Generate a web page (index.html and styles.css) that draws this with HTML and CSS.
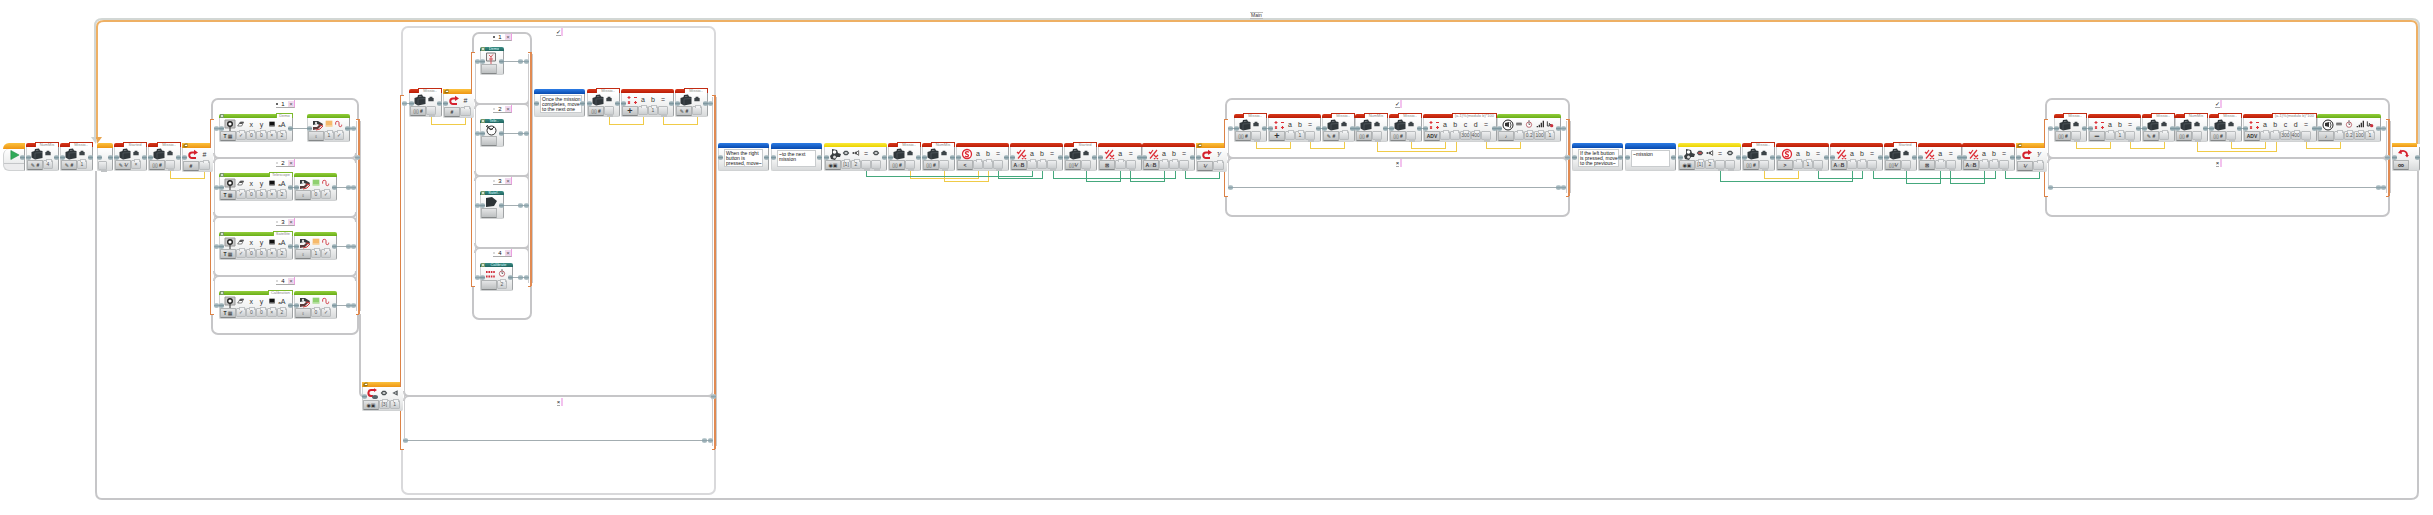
FILE: index.html
```html
<!DOCTYPE html>
<html lang="en">
<head>
<meta charset="utf-8">
<title>Main program</title>
<link rel="stylesheet" href="styles.css">
</head>
<body>
<svg class="defs" aria-hidden="true">
  <defs>
    <linearGradient id="ball" x1="0" y1="0" x2="0" y2="1"><stop offset="0" stop-color="#c9d6da"/><stop offset=".5" stop-color="#8da4ac"/><stop offset="1" stop-color="#bccace"/></linearGradient>
    <symbol id="case" viewBox="0 0 12 12"><path d="M.5 4 3.500 3 4 1 8 .5 9 2.500 11.500 3V10L4 11.500 .5 9.500Z" fill="#30373b"/><path d="M5 2.800V2H7.500V2.500Z" fill="#8a8f92"/><path d="M4 5V11M4 5 11 4.500" stroke="#515a5f" stroke-width=".7" fill="none"/></symbol>
    <symbol id="minicase" viewBox="0 0 12 12"><path d="M2 4.500 4 4V2.500H8V4L10 4.500V9.500H2Z" fill="#3c4347"/></symbol>
    <symbol id="play" viewBox="0 0 12 12"><path d="M2 1 11 6 2 11Z" fill="#2faa57" stroke="#1f8a43" stroke-width=".6"/></symbol>
    <symbol id="turn" viewBox="0 0 12 12"><path d="M8 3.500H5A2.500 2.500 0 0 0 5 9H9" fill="none" stroke="#d5202c" stroke-width="2"/><path d="M7 .8 11 3.500 7 6Z" fill="#d5202c"/></symbol>
    <symbol id="turnbrick" viewBox="0 0 12 12"><path d="M8 2H5A2.500 2.500 0 0 0 4 8H6" fill="none" stroke="#d5202c" stroke-width="2"/><path d="M7 .2 10 2 7 4Z" fill="#d5202c"/><ellipse cx="8" cy="9" rx="3" ry="2" fill="#57656a"/></symbol>
    <symbol id="loop" viewBox="0 0 12 12"><path d="M3 4C6 2 10 3 10 7" fill="none" stroke="#d5202c" stroke-width="1.800"/><path d="M1 5 4 1.500 5 6Z" fill="#d5202c"/><path d="M8 7H12L10 9.500Z" fill="#d5202c"/></symbol>
    <symbol id="math" viewBox="0 0 12 12"><path d="M1.500 3.500H4.500M3 2V5M8 3.500H11M2 7.500 4 9.500M4 7.500 2 9.500M8 8.500H11M9.500 7V10" stroke="#dd3038" stroke-width="1.100"/></symbol>
    <symbol id="logic" viewBox="0 0 12 12"><path d="M2 4 3.500 5.500 6 2M3 10.500 10 2M7 7 11 11M11 7 7 11" stroke="#dd3038" stroke-width="1.200" fill="none"/></symbol>
    <symbol id="compare" viewBox="0 0 12 12"><circle cx="6" cy="6" r="4.500" fill="#fff" stroke="#dd2833" stroke-width="1.300"/><path d="M8 4.200C6 3 4 4 4.500 5.200S8 6.500 7.500 7.700 5 9 4 7.800" stroke="#dd2833" stroke-width="1.300" fill="none"/></symbol>
    <symbol id="display" viewBox="0 0 12 12"><path d="M1 1H11V9H1Z" fill="#c9c9c9" stroke="#999"/><circle cx="6" cy="5" r="2.300" fill="#fff" stroke="#222" stroke-width="1.400"/><path d="M6 8V12" stroke="#333"/></symbol>
    <symbol id="eraser" viewBox="0 0 12 12"><path d="M1 9 5 3H10L7 9Z" fill="#fff" stroke="#444"/><path d="M5 3H10L8 6H3Z" fill="#555"/></symbol>
    <symbol id="contrast" viewBox="0 0 12 12"><path d="M2 2.500H10V9.500H2Z" fill="#111"/><path d="M2 8H10V9.500H2Z" fill="#888"/></symbol>
    <symbol id="light" viewBox="0 0 12 12"><path d="M1 2 6 2 11 5 10 7 5 5 1 6Z" fill="#33383a"/><path d="M10 6 6 10 1 11V8L5 8 9 4Z" fill="#5b3a3a"/><path d="M7 6 11 7 8 10 4 11" stroke="#d03a3a" fill="none"/><circle cx="4" cy="4" r="1.200" fill="#ddd"/></symbol>
    <symbol id="orange" viewBox="0 0 12 12"><path d="M1 1H11V10H1Z" fill="#f6ba6b"/><path d="M1 8H11V10H1Z" fill="#f8d9ac"/></symbol>
    <symbol id="green" viewBox="0 0 12 12"><path d="M1 1H11V10H1Z" fill="#8fd070"/><path d="M1 8H11V10H1Z" fill="#c4e7b3"/></symbol>
    <symbol id="pulse" viewBox="0 0 12 12"><path d="M1 7V4Q1 2 3.500 2T6 4V8Q6 10 8 10T10 8V7" fill="none" stroke="#cf3540" stroke-width="1.400"/></symbol>
    <symbol id="brick" viewBox="0 0 12 12"><path d="M3 1 8 2 9 5 12 6 11 9 8 9 6 12 2 11 1 8 3 6Z" fill="#3a3f41"/><circle cx="5.500" cy="4" r="1.800" fill="#fff"/><circle cx="5.500" cy="9" r="1.500" fill="#ddd"/></symbol>
    <symbol id="dial" viewBox="0 0 12 12"><path d="M1 6 4 2.500H8L11 6 8 9.500H4Z" fill="#4a5052"/><path d="M4 6H8" stroke="#fff" stroke-width="2"/></symbol>
    <symbol id="dialred" viewBox="0 0 12 12"><path d="M1 6 4 2.500H8L11 6 8 9.500H4Z" fill="#4a5052"/><path d="M3.500 6H8.500" stroke="#e55" stroke-width="2"/></symbol>
    <symbol id="plug" viewBox="0 0 12 12"><path d="M1 6H5M5 6 10 2.500V9.500L5 6" fill="none" stroke="#444" stroke-width="1.200"/><path d="M5 4H7V8H5ZM1 5H3V7H1Z" fill="#333"/></symbol>
    <symbol id="tri" viewBox="0 0 12 12"><path d="M10 2V10L2 6Z" fill="#555b5e"/><path d="M8 5V7L5 6Z" fill="#fff"/></symbol>
    <symbol id="speaker" viewBox="0 0 12 12"><circle cx="6" cy="6" r="5" fill="#fff" stroke="#222"/><path d="M3 4 7 3V8L3 7Z" fill="#333"/><path d="M8 3Q10 6 8 9" fill="none" stroke="#555"/></symbol>
    <symbol id="clock" viewBox="0 0 12 12"><circle cx="6" cy="7" r="4" fill="#fff" stroke="#a22d38"/><path d="M6 4V7L8 6M4.500 1.500H7.500" stroke="#333" fill="none"/></symbol>
    <symbol id="bars" viewBox="0 0 12 12"><path d="M1 11V9H3V11ZM4 11V7H6V11ZM7 11V4H9V11ZM10 11V1H12V11Z" fill="#333"/></symbol>
    <symbol id="note" viewBox="0 0 12 12"><path d="M2 2V9H5V5L8 8" stroke="#444" stroke-width="1.500" fill="none"/><circle cx="8.500" cy="8.500" r="2.500" fill="#c9303d"/></symbol>
    <symbol id="keys" viewBox="0 0 12 12"><path d="M2 4H10V8H2Z" fill="#555"/><path d="M4.500 5V8M7.500 5V8" stroke="#ddd"/></symbol>
    <symbol id="home" viewBox="0 0 12 12"><path d="M1.500 1H10.500V9H1.500Z" fill="#f7eeee" stroke="#777"/><path d="M4 3 6 5 8 2.500M6 5V12M4 7H8" stroke="#cf3843" stroke-width=".8" fill="none"/></symbol>
    <symbol id="tele" viewBox="0 0 12 12"><circle cx="6.500" cy="6.500" r="4.500" fill="#fff" stroke="#333"/><path d="M1 2 6 6 9 3M2 1 5 5H8" stroke="#333" fill="none"/></symbol>
    <symbol id="sat" viewBox="0 0 12 12"><path d="M1 2 7 1 12 5 9 10 1 11Z" fill="#2c3336"/></symbol>
    <symbol id="cal" viewBox="0 0 12 12"><path d="M1 4H10M1 8.500H10" stroke="#d22e3b" stroke-width="2" stroke-dasharray="1.600 .8"/></symbol>
    <symbol id="folder" viewBox="0 0 12 12"><path d="M1 4 6 1H11V8L8 11H1Z" fill="#9b7411"/><path d="M4 6 6 4H10V7H4Z" fill="#fff"/></symbol>
  </defs>
</svg>
<main class="canvas" id="canvas">
  <svg class="wires" id="frames" width="2433" height="515" aria-hidden="true"></svg>
</main>
<script src="program.js"></script>
</body>
</html>
```

FILE: styles.css
```css
* { box-sizing: border-box; }

body {
  margin: 0;
  background: #fff;
  color: #333;
  font-family: "Liberation Sans", Roboto, sans-serif;
  font-size: 5px;
  line-height: 5px;
}

.defs { position: absolute; width: 0; height: 0; }
.canvas { position: relative; width: max-content; overflow: hidden; }
.wires { display: block; }

.wires .frame { fill: none; stroke: #c6c6c8; stroke-width: 2; }
.wires .soft { fill: none; stroke: #d9d9db; stroke-width: 2; }
.wires .thin { fill: none; stroke: #cbcbcd; stroke-width: 1; shape-rendering: crispEdges; }
.wires .beam { fill: none; stroke: #a3adb1; stroke-width: 1; }
.wires .rail { fill: none; stroke: #dc8246; stroke-width: 1; shape-rendering: crispEdges; }
.wires .railwide { fill: none; stroke: #e08a52; stroke-width: 2; }
.wires .looprail { fill: none; stroke: #eeb064; stroke-width: 2; }
.wires .loopgray { fill: none; stroke: #d2d7d5; stroke-width: 2; }
.wires .yellow { fill: none; stroke: #f0cb48; stroke-width: 1; shape-rendering: crispEdges; }
.wires .green { fill: none; stroke: #45a87d; stroke-width: 1; shape-rendering: crispEdges; }

.block {
  position: absolute;
  display: flex;
  flex-direction: column;
  height: 28px;
}

.head {
  display: flex;
  justify-content: space-between;
  align-items: center;
  height: 6px;
  padding: 0 1px;
  border-radius: 2px 2px 0 0;
}

.red .head { background: linear-gradient(#d93a1c, #b91c06); }
.lime .head { background: linear-gradient(#93ce3b, #68ad18); }
.gold .head { background: linear-gradient(#fbc13d, #ee9512); }
.sun .head { background: linear-gradient(#fbea3c, #ead200); }
.blue .head { background: linear-gradient(#2c7ce6, #0849ad); }
.teal .head { background: linear-gradient(#3a8d86, #20645f); color: #fff; }

.name {
  margin-left: auto;
  height: 4px;
  overflow: hidden;
  padding: 0 2px;
  background: #fff;
  color: #888;
  font-size: 4px;
  line-height: 4px;
  text-align: center;
  white-space: nowrap;
}
.red .name { min-width: 22px; box-shadow: 0 0 0 1px #c22c14; }
.lime .name { min-width: 15px; box-shadow: 0 0 0 1px #7cba2c; }
.teal .name { background: none; color: #dff; padding: 0; margin: 0 auto; }
.head svg { width: 5px; height: 5px; }
.sq { width: 4px; height: 4px; background: #d5e3d0; border: 1px solid #7a9a6a; }

.body {
  display: flex;
  flex: 1;
  padding-right: 5px;
  border: 1px solid #d0d2d3;
  border-top: 0;
  border-right-color: #a0a3a5;
  border-radius: 0 0 2px 2px;
  background: linear-gradient(#fff, #eeefef 60%, #d8dadb);
}
.lead { display: flex; flex-direction: column; width: 16px; }
.lead svg { width: 12px; height: 12px; margin: 1px 0 0 4px; }

.mode {
  width: 16px;
  height: 10px;
  padding: 0;
  border: 1px solid #b0b3b4;
  border-bottom-color: #858889;
  border-radius: 1px;
  background: linear-gradient(#e4e5e6, #bdc0c1);
  color: #333;
  font: bold 5px/7px "Liberation Sans", "DejaVu Sans", sans-serif;
  text-align: center;
  white-space: nowrap;
}
.big { font-size: 9px; }

.param { display: flex; flex-direction: column; flex: 1; align-items: center; }
.glyph { display: flex; align-items: center; justify-content: center; height: 12px; font-size: 7px; line-height: 7px; }
.glyph svg { width: 8px; height: 8px; }
.slot {
  position: relative;
  width: 100%;
  height: 9px;
  margin-top: 1px;
  border: 1px solid #b9bcbe;
  border-radius: 1px;
  background: linear-gradient(#eeeff0, #cbced0);
  color: #555;
  font-size: 5px;
  line-height: 7px;
  text-align: center;
}
.slot::before {
  content: "";
  position: absolute;
  left: 50%;
  top: -2px;
  width: 4px;
  height: 2px;
  margin-left: -2px;
  border: 1px solid #bfc2c4;
  border-bottom: 0;
  background: #f2f3f4;
}
.out::before { top: 7px; background: #bfc2c4; }

.block::before, .block::after {
  content: "";
  position: absolute;
  top: 12px;
  width: 5px;
  height: 5px;
  border-radius: 2px;
  background: linear-gradient(#c3d1d5, #7f98a0 50%, #b4c4c9);
}
.block::before { left: 0; }
.block::after { right: 0; }
.start::before, .switch::after { display: none; }

.start .head { border-radius: 8px 0 0 0; }
.start .body { border-radius: 6px 0 0 6px; padding: 0; flex-direction: column; }
.start .body svg { width: 11px; height: 12px; margin-left: 5px; }
.start .base { flex: 1; margin-top: 2px; border-top: 1px solid #c4c6c8; border-radius: 0 0 0 6px; background: #ececed; }
.switch .body { padding-right: 3px; border-right: 0; }
.switch .head, .loopend .head { margin-right: 3px; border-radius: 0; }

.note {
  flex: 1;
  margin: 1px 5px 3px;
  padding: 1px 0 0 1px;
  border: 1px solid #c9ccce;
  background: #fff;
  color: #111;
  white-space: pre;
}
.comment .body { padding: 0; }

.case {
  position: absolute;
  display: flex;
  align-items: center;
  justify-content: space-between;
  width: 19px;
  height: 8px;
  border-right: 1px solid #eb9fe0;
  border-bottom: 1px solid #aaa;
  line-height: 6px;
}
.case span { color: #111; font-size: 6px; }
.case i { width: 2px; height: 2px; border-radius: 1px; background: #ccc; }
.case .on { background: #333; }
.case button {
  width: 6px;
  height: 6px;
  padding: 0;
  border: 0;
  background: #f0d9ee;
  color: #555;
  font: 6px/6px "Liberation Sans", sans-serif;
}
.case.flag { width: 7px; justify-content: center; border-bottom: 0; border-right: 2px solid #f3c2ee; }
.flag span { border-bottom: 1px solid #aaa; }

.loopname {
  position: absolute;
  padding: 0 1px;
  border: 1px solid #bbb;
  border-width: 1px 0;
  background: #fff;
}
```

FILE: program.js
```
const canvas = document.getElementById('canvas');
const frames = document.getElementById('frames');
const icon = id => `<svg viewBox="0 0 12 12" aria-hidden="true"><use href="#${id}"/></svg>`;
const svg = [];
const path = (cls, d) => svg.push(`<path class="${cls}" d="${d}"/>`);
const ball = (x, y) => svg.push(`<rect x="${x - 3}" y="${y - 2}" width="5" height="5" rx="2" fill="url(#ball)"/>`);

function add(cls, x, y, w, html) {
  const el = document.createElement('div');
  el.className = cls;
  el.style.left = x + 'px';
  el.style.top = y + 'px';
  if (w) el.style.width = w + 'px';
  el.innerHTML = html;
  canvas.append(el);
}

/* A parameter is "glyph|value|out"; a glyph that starts with @ is an icon. */
function param(text) {
  const [g, v = '', out] = text.split('|');
  const glyph = g[0] === '@' ? icon(g.slice(1)) : g;
  return `<div class="param"><div class="glyph">${glyph}</div><div class="slot${out ? ' out' : ''}">${v}</div></div>`;
}

function block(color, x, y, w, o) {
  const name = o.name ? `<span class="name">${o.name}</span>` : '';
  const mark = o.mark ? (o.mark === 'sq' ? '<i class="sq"></i>' : icon(o.mark)) : '';
  const mode = o.mode === undefined ? '' : `<button class="mode${o.big ? ' big' : ''}">${o.mode}</button>`;
  add(`block ${color}`, x, y, w,
    `<div class="head">${mark}${name}</div><div class="body"><div class="lead">${icon(o.icon)}${mode}</div>${(o.params || []).map(param).join('')}</div>`);
}

const variable = (x, y, name, mode, value, out) =>
  block('red', x, y, 33, { name, icon: 'case', mode, params: [`@minicase|${value}|${out ? 1 : ''}`] });
const maths = (x, y, mode) => block('red', x, y, 53, { icon: 'math', mode, big: true, params: ['a', 'b|1', '=||1'] });
const compare = (x, y, mode, b) => block('red', x, y, 53, { icon: 'compare', mode, params: ['a', 'b|' + b, '=||1'] });
const both = (x, y) => block('red', x, y, 53, { icon: 'logic', mode: 'A∩B', params: ['a', 'b', '=||1'] });
const invert = (x, y) => block('red', x, y, 44, { icon: 'logic', mode: '⊠', params: ['a', '=||1'] });
const display = (x, y, name) => block('lime', x, y, 74, { name, mark: 'sq', icon: 'display', mode: 'T ▦', params: ['@eraser|✓', 'x|0', 'y|0', '@contrast|×', 'ₐA|2'] });
const light = (x, y, color, on) => block('lime', x, y, 43, { icon: 'light', mode: '♀', params: [`@${color}|${on}`, '@pulse|✓'] });
const buttons = (x, y, dial) => block('sun', x, y, 63, { icon: 'brick', mode: '◉▣', params: [`@${dial}|[1]`, '@plug|2', '=||1', '@dial||1'] });
const comment = (x, y, text) => add('block blue comment', x, y, 51, `<div class="head"></div><div class="body"><div class="note">${text}</div></div>`);
const switchHead = (x, y, w, mode, params, ic = 'turn') => block('gold switch', x, y, w, { mark: 'folder', icon: ic, mode, params });
const flag = (x, y, t) => add('case flag', x, y, 0, `<span>${t}</span>`);
const tab = (x, y, n) => add('case', x, y, 0, `<i${n === 1 ? ' class="on"' : ''}></i><span>${n}</span><button aria-label="Remove case ${n}">×</button>`);
const wire = (cls, x1, y1, low, x2) => path(cls, `M${x1} ${y1}V${low}H${x2}V${y1 - 2}`);

/* Rounded frame with lines between its cases. */
function frame(x1, y1, x2, y2, splits, cls = 'frame') {
  svg.push(`<rect class="${cls}" x="${x1}" y="${y1}" width="${x2 - x1}" height="${y2 - y1}" rx="6"/>`);
  splits.forEach(y => path('frame', `M${x1 + 2} ${y - 5}Q${x1 + 2} ${y} ${x1 + 7} ${y}H${x2 - 7}Q${x2 - 2} ${y} ${x2 - 2} ${y - 5}M${x1 + 2} ${y + 5}Q${x1 + 2} ${y} ${x1 + 7} ${y}M${x2 - 7} ${y}Q${x2 - 2} ${y} ${x2 - 2} ${y + 5}`));
}
function rails(x1, x2, top, bottom) {
  svg.push(`<rect x="${x1}" y="${top}" width="3" height="${bottom - top}" fill="#fff"/>`);
  svg.push(`<rect x="${x2 - 3}" y="${top}" width="4" height="${bottom - top}" fill="#fff"/>`);
  path('rail', `M${x1 + 4} ${top}H${x1}V${bottom}H${x1 + 4}`);
  path('thin', `M${x1 + 4} ${top + 8}V${bottom - 10}`);
  path('railwide', `M${x2} ${top}V${bottom}`);
  path('rail', `M${x2 - 3} ${top}H${x2}M${x2 - 3} ${bottom}H${x2}`);
  path('thin', `M${x2 - 3} ${top + 2}V${bottom - 3}M${x2 + 1} ${top + 2}V${bottom - 3}`);
}

/* Main loop */
path('loopgray', 'M95 138V26Q95 19 102 19H2412Q2419 19 2419 26V144');
path('looprail', 'M97 139V27Q97 21 104 21H2411Q2417 21 2417 27V144');
svg.push('<path d="M91 137H96V144Z" fill="#cdd3d3"/><path d="M96 137H102L97 144Z" fill="#e9a550"/>');
path('frame', 'M96 171V492Q96 499 102 499H2411Q2418 499 2418 492V170');
add('loopname', 1250, 12, 0, 'Main');

/* Display switch */
frame(212, 99, 358, 334, [158, 217, 276]);
rails(210, 359, 119, 314);
path('frame', 'M360 314V392Q360 396 363 396');
ball(358, 157);
[128, 187, 246, 305].forEach((y, i) => {
  path('beam', `M216 ${y}.5H355`);
  [217, 349, 354].forEach(x => ball(x, y));
  tab(276, y - 28, i + 1);
});

/* Mission switch */
frame(402, 27, 715, 494, [396], 'soft');
rails(400, 715, 95, 449);
path('beam', 'M405 440.5H712M405 103.5H442M690 103.5H712');
[[406, 440], [705, 440], [711, 440], [405, 103], [711, 103], [714, 396]].forEach(p => ball(...p));
flag(556, 28, '✓');
flag(556, 398, '×');
frame(473, 33, 531, 319, [104, 176, 248]);
rails(471, 531, 52, 286);
[61, 133, 205, 277].forEach((y, i) => {
  path('beam', `M476 ${y}.5H528`);
  [478, 521, 527].forEach(x => ball(x, y));
  tab(493, y - 28, i + 1);
});

/* Button switches */
[0, 820].forEach(dx => {
  frame(1226 + dx, 99, 1569 + dx, 216, [158]);
  rails(1224 + dx, 1569 + dx, 119, 196);
  path('beam', `M${1229 + dx} 187.5H${1566 + dx}M${1229 + dx} 128.5H${1566 + dx}`);
  [[1231, 128], [1564, 128], [1231, 187], [1559, 187], [1564, 187], [1568, 157]].forEach(p => ball(p[0] + dx, p[1]));
  flag(1395 + dx, 100, '✓');
  flag(1395 + dx, 159, '×');
});

/* Wires */
[[170, 170, 178, 204], [431, 116, 124, 465], [609, 116, 124, 643], [663, 116, 124, 697],
 [910, 170, 178, 978], [944, 170, 181, 988], [1764, 170, 178, 1798]].forEach(w => wire('yellow', ...w));
[0, 820].forEach(dx => [[1256, 141, 148, 1290], [1310, 141, 148, 1344], [1377, 141, 151, 1456], [1411, 141, 148, 1445], [1486, 141, 148, 1520]]
  .forEach(w => wire('yellow', w[0] + dx, w[1], w[2], w[3] + dx)));
[[866, 170, 176, 1032], [998, 170, 178, 1042], [1053, 170, 178, 1175], [1086, 170, 181, 1120], [1130, 170, 181, 1164], [1185, 170, 178, 1219],
 [1720, 170, 181, 1852], [1818, 170, 178, 1862], [1873, 170, 178, 1995], [1906, 170, 183, 1940], [1950, 170, 183, 1984], [2005, 170, 178, 2039]]
  .forEach(w => wire('green', ...w));

frames.innerHTML = `<g>${svg.join('')}</g>`;

/* Opening sequence */
add('block gold start', 3, 143, 22, `<div class="head"></div><div class="body">${icon('play')}<div class="base"></div></div>`);
variable(26, 143, 'NumMis', '✎ #', '4');
variable(60, 143, 'Missio..', '✎ #', '1');
add('block gold', 97, 143, 16, '<div class="head"></div><div class="body"><div class="param"><div class="glyph"></div><div class="slot out"></div></div></div>');
variable(114, 143, 'Started', '✎ ⅟', '×');
variable(148, 143, 'Missio..', '▯▯ #', '', true);
switchHead(182, 143, 31, '#', ['#']);

['Demo', 'Telescope', 'Satellite', 'Calibration'].forEach((n, i) => {
  const y = 114 + i * 59;
  display(219, y, n);
  light(i ? 294 : 307, y, i % 2 ? 'green' : 'orange', i % 2 ? '0' : '1');
});

/* Run the chosen mission */
switchHead(362, 382, 41, '◉▣', ['@dial|[3]', '@tri|1'], 'turnbrick');
variable(409, 89, 'Missio..', '▯▯ #', '', true);
switchHead(443, 89, 31, '#', ['#']);
[['Demo', 'home'], ['Tele..', 'tele'], ['Satel..', 'sat']].forEach(([name, ic], i) =>
  block('teal', 480, 47 + i * 72, 24, { name, mark: 'sq', icon: ic, mode: '' }));
block('teal', 480, 263, 33, { name: 'Calibrate', mark: 'sq', icon: 'cal', mode: '', params: ['@clock|2'] });
comment(534, 89, 'Once the mission\ncompletes, move\nto the next one');
variable(587, 89, 'Missio..', '▯▯ #', '', true);
maths(621, 89, '+');
variable(675, 89, 'Missio..', '✎ #', '');

/* Right and left buttons */
comment(718, 143, 'When the right\nbutton is\npressed, move~');
comment(771, 143, '~to the next\nmission');
buttons(824, 143, 'dial');
variable(888, 143, 'Missio..', '▯▯ #', '', true);
variable(922, 143, 'NumMis', '▯▯ #', '', true);
compare(956, 143, '&lt;', '');
comment(1572, 143, 'If the left button\nis pressed, move\nto the previous~');
comment(1625, 143, '~mission');
buttons(1678, 143, 'dialred');
variable(1742, 143, 'Missio..', '▯▯ #', '', true);
compare(1776, 143, '&gt;', '1');
[0, 820].forEach(dx => {
  both(1010 + dx, 143);
  variable(1064 + dx, 143, 'Started', '▯▯⅟', '', true);
  invert(1098 + dx, 143);
  both(1142 + dx, 143);
  switchHead(1196 + dx, 143, 31, '⅟', ['⅟']);
  variable(1234 + dx, 114, 'Missio..', '▯▯ #', '', true);
  maths(1268 + dx, 114, dx ? '−' : '+');
  variable(1322 + dx, 114, 'Missio..', '✎ #', '');
  variable(1355 + dx, 114, 'NumMis', '▯▯ #', '', true);
  variable(1389 + dx, 114, 'Missio..', '▯▯ #', '', true);
  block('red', 1423 + dx, 114, 74, { name: '(a-1)%(modulo b)*100', icon: 'math', mode: 'ADV', params: ['a', 'b', 'c|300', 'd|400', '=||1'] });
  block('lime', 1497 + dx, 114, 64, { icon: 'speaker', mode: '♪', params: ['@keys', '@clock|0.2', '@bars|100', '@note|1'] });
});
block('gold loopend', 2392, 143, 28, { icon: 'loop', mode: '∞', big: true });
```
